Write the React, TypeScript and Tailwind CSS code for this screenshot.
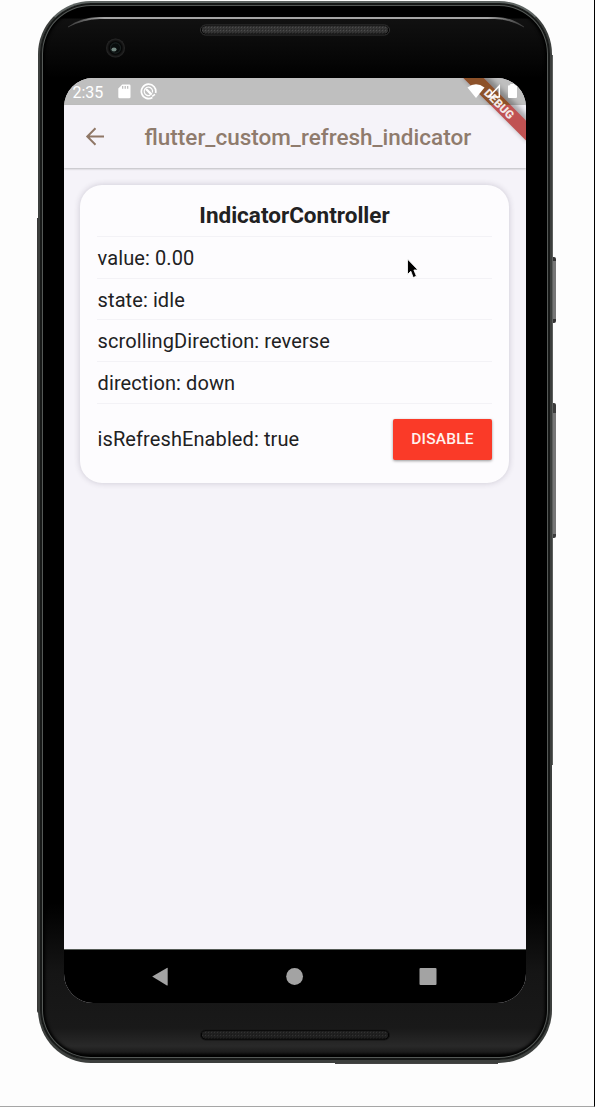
import React from 'react';

const rows = ['value: 0.00', 'state: idle', 'scrollingDirection: reverse', 'direction: down'];

function SpeakerGrille({ dim = false }: { dim?: boolean }) {
  return (
    <svg width="192" height="12" viewBox="0 0 192 12" className="block" aria-hidden="true">
      <defs>
        <pattern id={dim ? 'meshDim' : 'mesh'} width="3" height="3" patternUnits="userSpaceOnUse">
          <rect width="3" height="3" fill={dim ? '#202020' : '#343434'} />
          <rect width="1" height="1" fill={dim ? '#323232' : '#4c4c4c'} />
          <rect x="2" y="2" width="1" height="1" fill={dim ? '#191919' : '#262626'} />
        </pattern>
      </defs>
      <rect x="1.5" y="1" width="189" height="10" rx="5" fill="#020202" stroke={dim ? '#151515' : '#353535'} />
      <rect x="3" y="2" width="186" height="7.5" rx="3.5" fill={dim ? 'url(#meshDim)' : 'url(#mesh)'} />
    </svg>
  );
}

function StatusBar() {
  return (
    <div className="flex h-[27px] shrink-0 items-center bg-[#bfbfbf] pl-[9px] text-white">
      <span className="w-[45px] pt-px text-[16px] leading-[27px]">2:35</span>
      <svg width="13" height="15" viewBox="0 0 13 15" className="block" aria-hidden="true">
        <path d="M4.2 .5H11.2Q12.5.5 12.5 1.8V13Q12.5 14.3 11.2 14.3H1.6Q.3 14.3.3 13V4.5Z" fill="#fff" />
        <path d="M4.7 2V4.7M7.2 2V4.7M9.7 2V4.7" stroke="#b8b8b8" strokeWidth="1.2" />
      </svg>
      <svg width="17" height="17" viewBox="0 0 17 17" className="ml-[9.5px] block" fill="none" stroke="#fff" aria-hidden="true">
        <path d="M12.4 14.5A7.2 7.2 0 1 1 15.6 10" strokeWidth="1.7" />
        <path d="M10.2 12.1A4.2 4.2 0 1 1 12.4 9.5" strokeWidth="1.2" />
        <path d="M6 6L11.7 11.6" strokeWidth="2.3" />
        <path d="M12.1 13.4L15 11.4" strokeWidth="1.5" />
      </svg>
    </div>
  );
}

function DebugBanner() {
  return (
    <div className="absolute right-0 top-0 h-[66px] w-[66px]">
      <svg width="66" height="66" viewBox="0 0 66 66" className="absolute left-0 top-0" aria-hidden="true">
        <defs>
          <filter id="ribbonShadow" x="-30%" y="-30%" width="160%" height="160%">
            <feGaussianBlur stdDeviation="2.5" />
          </filter>
          <clipPath id="statusClip"><rect width="66" height="27" /></clipPath>
        </defs>
        <path d="M1-3H27L69 39V65Z" fill="#000" opacity=".3" filter="url(#ribbonShadow)" />
        <path d="M3.5 0H23.5L66 42.5V62.5Z" fill="#c05252" />
        <path d="M3.5 0H23.5L66 42.5V62.5Z" fill="#8c5129" clipPath="url(#statusClip)" />
      </svg>
      <span className="absolute left-[14px] top-[19px] w-[50px] rotate-45 text-center text-[11.5px] font-black leading-[14px] text-[#f3e9e7]">DEBUG</span>
      <svg width="66" height="30" viewBox="0 0 66 30" className="absolute left-0 top-0" aria-hidden="true">
        <path d="M7.5 9.5Q16 2.8 24.5 9.5L16 20Z" fill="#fff" />
        <path d="M28.8 19.1L39.3 8V19.1Z" fill="none" stroke="#fff" strokeWidth="1.5" />
        <path d="M48 8.2Q48 7.3 49 7.3H50.2V6H54.6V7.3H56Q57 7.3 57 8.2V19Q57 20 56 20H49Q48 20 48 19Z" fill="#fff" />
      </svg>
    </div>
  );
}

function ControllerCard() {
  return (
    <section className="ml-[16.5px] mr-[17px] mt-[17px] h-[298px] rounded-[22px] bg-[#fdfcfe] px-[17px] pt-[9px] text-[#212122] shadow-[0_0_6px_rgba(40,30,60,0.2)]">
      <h2 className="h-[42px] text-center text-[22.5px] font-bold leading-[42px]">IndicatorController</h2>
      {rows.map((row) => (
        <div key={row} className="h-[41.7px] border-t border-[#f3f2f6] pl-[0.6px] pt-px text-[20px] leading-[40.5px] tracking-[0.09px]">{row}</div>
      ))}
      <div className="flex h-[73px] items-center justify-between border-t border-[#f3f2f6]">
        <span className="-mt-px pl-[0.6px] text-[20px] tracking-[0.09px]">isRefreshEnabled: true</span>
        <button className="h-[41px] w-[99px] rounded-[2px] bg-[#fa3a28] text-[15.5px] font-medium tracking-[0.2px] text-[#fff2ef] shadow-[0_1px_3px_rgba(0,0,0,0.4)]">DISABLE</button>
      </div>
    </section>
  );
}

export default function App() {
  return (
    <main className="relative h-[1107px] w-[595px] overflow-hidden border-b border-r border-b-[#a6a6a6] border-r-black bg-[#fdfdfd] pl-[38px] pt-px font-[Roboto,sans-serif]">
      <div className="absolute left-[37px] top-[218px] h-[795px] w-[4px] rounded-b-[4px] bg-[#383838]" />
      <div className="absolute left-[550px] top-[257px] h-[66px] w-[6px] rounded-r-[2px] border-y-4 border-[#333] bg-[#777]" />
      <div className="absolute left-[550px] top-[403px] h-[135px] w-[6px] rounded-r-[2px] border-b-4 border-t-[10px] border-[#3c3c3c] bg-[#777]" />
      <div className="absolute left-[550px] top-[55px] h-[710px] w-[3px] bg-[#5c5f5d]" />
      <div className="absolute left-[335px] top-[1060px] h-[4px] w-[163px] bg-[#444]" />

      <div className="relative flex h-[1062px] w-[514px] flex-col rounded-[53px] border-2 border-b-[3px] border-[#3c3f3d] border-t-[#5e6462] bg-[linear-gradient(#000_0,#000_15px,#111_16px,#050505_60px,#000_75px,#000_900px,#151515_970px,#191919_1025px,#292929_1043px,#1c1c1c_1049px,#000_1054px)] shadow-[inset_0_0_0_2px_#171918,inset_0_0_0_3px_#555957,inset_0_0_3px_5px_#000]">
        <svg width="510" height="76" viewBox="0 0 510 76" className="absolute left-0 top-0" aria-hidden="true">
          <defs>
            <linearGradient id="rim">
              <stop offset="0" stopColor="#555" stopOpacity=".4" />
              <stop offset=".08" stopColor="#b7b7b7" />
              <stop offset=".92" stopColor="#b7b7b7" />
              <stop offset="1" stopColor="#555" stopOpacity=".4" />
            </linearGradient>
            <radialGradient id="lens">
              <stop offset="0" stopColor="#050808" />
              <stop offset=".5" stopColor="#10201f" />
              <stop offset=".65" stopColor="#050505" />
              <stop offset="1" stopColor="#292929" />
            </radialGradient>
          </defs>
          <path d="M28 24Q41 14.5 60 14.5H455Q472 14.5 484 24Q470 16 455 15.5H60Q43 16 28 24Z" fill="url(#rim)" stroke="url(#rim)" strokeWidth=".8" />
          <circle cx="75.5" cy="45" r="9.5" fill="url(#lens)" />
          <circle cx="75.5" cy="45" r="5" fill="#080c0c" stroke="#1b2020" />
          <ellipse cx="74" cy="46.5" rx="2.6" ry="2" fill="#71857f" />
        </svg>
        <div className="relative flex h-[75px] shrink-0 justify-center pt-[21px]"><SpeakerGrille /></div>

        <div className="relative ml-[23.5px] flex h-[925px] w-[462.5px] shrink-0 flex-col overflow-hidden rounded-[29px] bg-[#f5f3f9]">
          <StatusBar />
          <header className="relative z-[1] flex h-[63px] shrink-0 items-center bg-[#f5f3f9] pl-[21.5px] text-[#8f7767] shadow-[0_1px_2px_rgba(0,0,0,0.24)]">
            <svg width="20" height="20" viewBox="0 0 20 20" fill="none" stroke="currentColor" strokeWidth="2" className="block" aria-hidden="true">
              <path d="M19 9.5H2.5M10.5 1.3L2.3 9.5L10.5 17.7" />
            </svg>
            <h1 className="ml-[39.5px] text-[22.5px] font-medium leading-[30px] text-[#8f7b6d]">flutter_custom_refresh_indicator</h1>
          </header>
          <div className="flex-1"><ControllerCard /></div>
          <nav className="h-[54px] shrink-0 border-t border-[#555b57] bg-black">
            <svg width="462" height="53" viewBox="0 0 462 53" fill="#a3a3a3" className="block" aria-hidden="true">
              <path d="M88.2 26.4L102.9 17.9Q103.7 17.5 103.7 18.4V34.9Q103.7 35.8 102.9 35.4Z" />
              <circle cx="230.6" cy="26.5" r="8.4" />
              <rect x="355.5" y="18" width="17" height="17" rx="1" />
            </svg>
          </nav>
          <div className="absolute right-0 top-0 z-[2]"><DebugBanner /></div>
        </div>

        <div className="flex justify-center pt-[26px]"><SpeakerGrille dim /></div>
      </div>

      <svg width="14" height="22" viewBox="0 0 14 20" preserveAspectRatio="none" className="absolute left-[406px] top-[258px]" aria-hidden="true">
        <path d="M1.5 1V15L4.8 12L7.2 17.8L10.4 16.5L7.9 10.9H12Z" fill="#000" stroke="#fff" strokeWidth=".8" />
      </svg>
    </main>
  );
}
